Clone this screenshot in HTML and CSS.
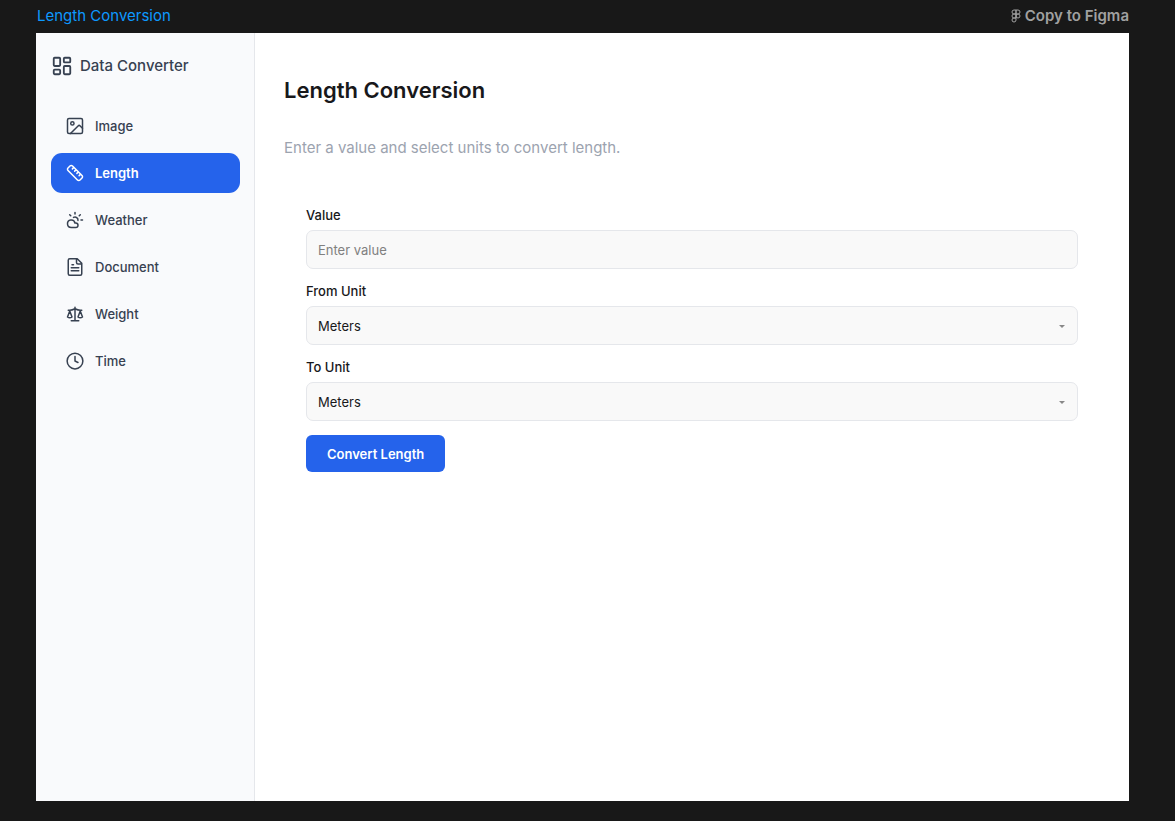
FILE: index.html
```html
<!DOCTYPE html>
<html lang="en">
<head>
<meta charset="utf-8">
<meta name="viewport" content="width=device-width, initial-scale=1">
<title>Length Conversion</title>
<link rel="stylesheet" href="styles.css">
</head>
<body>
<header class="topbar">
  <span class="topbar-title">Length Conversion</span>
  <button type="button" class="copy-button">
    <svg class="figma-icon" viewBox="0 0 10 14" aria-hidden="true"><path d="M5 1H3a2 2 0 0 0 0 4h2zM5 1h2a2 2 0 0 1 0 4H5zM5 5H3a2 2 0 0 0 0 4h2zM7 5a2 2 0 1 1 0 4 2 2 0 0 1 0-4zM5 5v4M5 9H3a2 2 0 1 0 2 2z"/></svg>
    Copy to Figma
  </button>
</header>
<div class="frame">
  <aside class="sidebar">
    <div class="brand">
      <svg class="icon brand-icon" viewBox="0 0 24 24" aria-hidden="true"><rect x="3" y="3" width="7" height="9" rx="1"/><rect x="14" y="3" width="7" height="5" rx="1"/><rect x="14" y="12" width="7" height="9" rx="1"/><rect x="3" y="16" width="7" height="5" rx="1"/></svg>
      <span>Data Converter</span>
    </div>
    <nav class="nav">
      <a class="nav-item" href="#image"><svg class="icon" viewBox="0 0 24 24" aria-hidden="true"><rect x="2" y="2" width="20" height="20" rx="2"/><circle cx="8.5" cy="8.5" r="2.2"/><path d="m22 15-3.09-3.09a2 2 0 0 0-2.82 0L6 22"/></svg>Image</a>
      <a class="nav-item active" href="#length" aria-current="page"><svg class="icon" viewBox="0 0 24 24" aria-hidden="true"><path d="M21.3 15.3a2.4 2.4 0 0 1 0 3.4l-2.6 2.6a2.4 2.4 0 0 1-3.4 0L2.7 8.7a2.4 2.4 0 0 1 0-3.4l2.6-2.6a2.4 2.4 0 0 1 3.4 0ZM14.5 12.5l2-2M11.5 9.5l2-2M8.5 6.5l2-2M17.5 15.5l2-2"/></svg>Length</a>
      <a class="nav-item" href="#weather"><svg class="icon" viewBox="0 0 24 24" aria-hidden="true"><path d="M12 2v2M4.93 4.93l1.41 1.41M20 12h2M19.07 4.93l-1.41 1.41M15.95 12.65a4 4 0 0 0-5.93-4.13M13 22H7a5 5 0 1 1 4.9-6H13a3 3 0 0 1 0 6Z"/></svg>Weather</a>
      <a class="nav-item" href="#document"><svg class="icon" viewBox="0 0 24 24" aria-hidden="true"><path d="M15 1H5a2 2 0 0 0-2 2v18a2 2 0 0 0 2 2h14a2 2 0 0 0 2-2V7ZM14 1v5a2 2 0 0 0 2 2h5M10 9H8M17 13H7M17 17H7"/></svg>Document</a>
      <a class="nav-item" href="#weight"><svg class="icon" viewBox="0 0 24 24" aria-hidden="true"><path d="m16 16 3-8 3 8c-.87.65-1.92 1-3 1s-2.13-.35-3-1ZM2 16l3-8 3 8c-.87.65-1.92 1-3 1s-2.13-.35-3-1ZM7 21h10M12 3v18M3 7h2c2 0 5-1 7-2 2 1 5 2 7 2h2"/></svg>Weight</a>
      <a class="nav-item" href="#time"><svg class="icon" viewBox="0 0 24 24" aria-hidden="true"><circle cx="12" cy="12" r="10.5"/><path d="M12 6v6l4 2"/></svg>Time</a>
    </nav>
  </aside>
  <main class="content">
    <h1 class="title">Length Conversion</h1>
    <p class="subtitle">Enter a value and select units to convert length.</p>
    <form class="form">
      <div class="field">
        <label for="value">Value</label>
        <input class="control" id="value" type="text" inputmode="decimal" placeholder="Enter value">
      </div>
      <div class="field">
        <label for="from-unit">From Unit</label>
        <div class="select-wrap">
          <select class="control" id="from-unit"><option>Meters</option><option>Kilometers</option></select>
          <svg class="caret" viewBox="0 0 6 3" aria-hidden="true"><path d="M0 0h6L3 3z"/></svg>
        </div>
      </div>
      <div class="field">
        <label for="to-unit">To Unit</label>
        <div class="select-wrap">
          <select class="control" id="to-unit"><option>Meters</option><option>Kilometers</option></select>
          <svg class="caret" viewBox="0 0 6 3" aria-hidden="true"><path d="M0 0h6L3 3z"/></svg>
        </div>
      </div>
      <button type="button" class="submit">Convert Length</button>
    </form>
  </main>
</div>
</body>
</html>
```
FILE: styles.css
```css
* { box-sizing: border-box; }

body {
  margin: 0;
  min-height: 100vh;
  padding: 0 46px 20px 36px;
  display: flex;
  flex-direction: column;
  background: #181818;
  color: #18181b;
  font: 13px/16px Inter, sans-serif;
}

.topbar {
  height: 33px;
  padding-bottom: 2px;
  display: flex;
  align-items: center;
  justify-content: space-between;
  font-size: 15px;
  line-height: 20px;
}

.topbar-title { color: #0d99ff; padding-left: 1px; }

.copy-button {
  display: flex;
  align-items: center;
  gap: 4px;
  padding: 0;
  border: 0;
  background: none;
  color: #a0a0a0;
  font: 600 15px/20px Inter, sans-serif;
}

.figma-icon {
  width: 10px;
  height: 14px;
  fill: none;
  stroke: currentColor;
}

.frame {
  flex: 1;
  display: flex;
  background: #fff;
}

.sidebar {
  flex: 0 0 219px;
  padding: 22px 14px 22px 15px;
  background: #f9fafc;
  border-right: 1px solid #e5e7eb;
  color: #374151;
}

.icon {
  width: 18px;
  height: 18px;
  flex: none;
  fill: none;
  stroke: currentColor;
  stroke-width: 2;
  stroke-linecap: round;
  stroke-linejoin: round;
}

.brand {
  display: flex;
  align-items: center;
  gap: 7px;
  font-size: 15px;
  font-weight: 500;
  line-height: 22px;
}

.brand-icon { width: 22px; height: 22px; }

.nav {
  display: grid;
  gap: 7px;
  margin-top: 29px;
}

.nav-item {
  display: flex;
  align-items: center;
  gap: 11px;
  height: 40px;
  padding: 0 15px;
  border-radius: 11px;
  color: inherit;
  font-weight: 500;
  text-decoration: none;
}

.nav-item.active {
  background: #2563eb;
  color: #fff;
  font-weight: 600;
}

.content {
  flex: 1;
  min-width: 0;
  padding: 43px 29px;
}

.title {
  margin: 0;
  font-size: 22px;
  font-weight: 600;
  line-height: 28px;
}

.subtitle {
  margin: 34px 0 0;
  color: #9ca3af;
  font-size: 15px;
  line-height: 20px;
}

.form {
  display: grid;
  justify-items: start;
  gap: 14px;
  padding: 49px 22px 0;
}

.field {
  width: 100%;
  display: grid;
  gap: 7px;
}

.field label { font-weight: 500; }

.control {
  display: block;
  width: 100%;
  height: 39px;
  padding: 0 11px;
  border: 1px solid #e5e7eb;
  border-radius: 7px;
  background: #f9f9f9;
  color: #18181b;
  font: 13px/16px Inter, sans-serif;
  appearance: none;
}

.control::placeholder { color: #808080; }

.select-wrap { position: relative; }

.caret {
  position: absolute;
  top: 19px;
  right: 13px;
  width: 6px;
  height: 3px;
  fill: #888;
  pointer-events: none;
}

.submit {
  height: 37px;
  padding: 0 21px;
  border: 0;
  border-radius: 6px;
  background: #2563eb;
  color: #fff;
  font: 600 13px/16px Inter, sans-serif;
}
```
